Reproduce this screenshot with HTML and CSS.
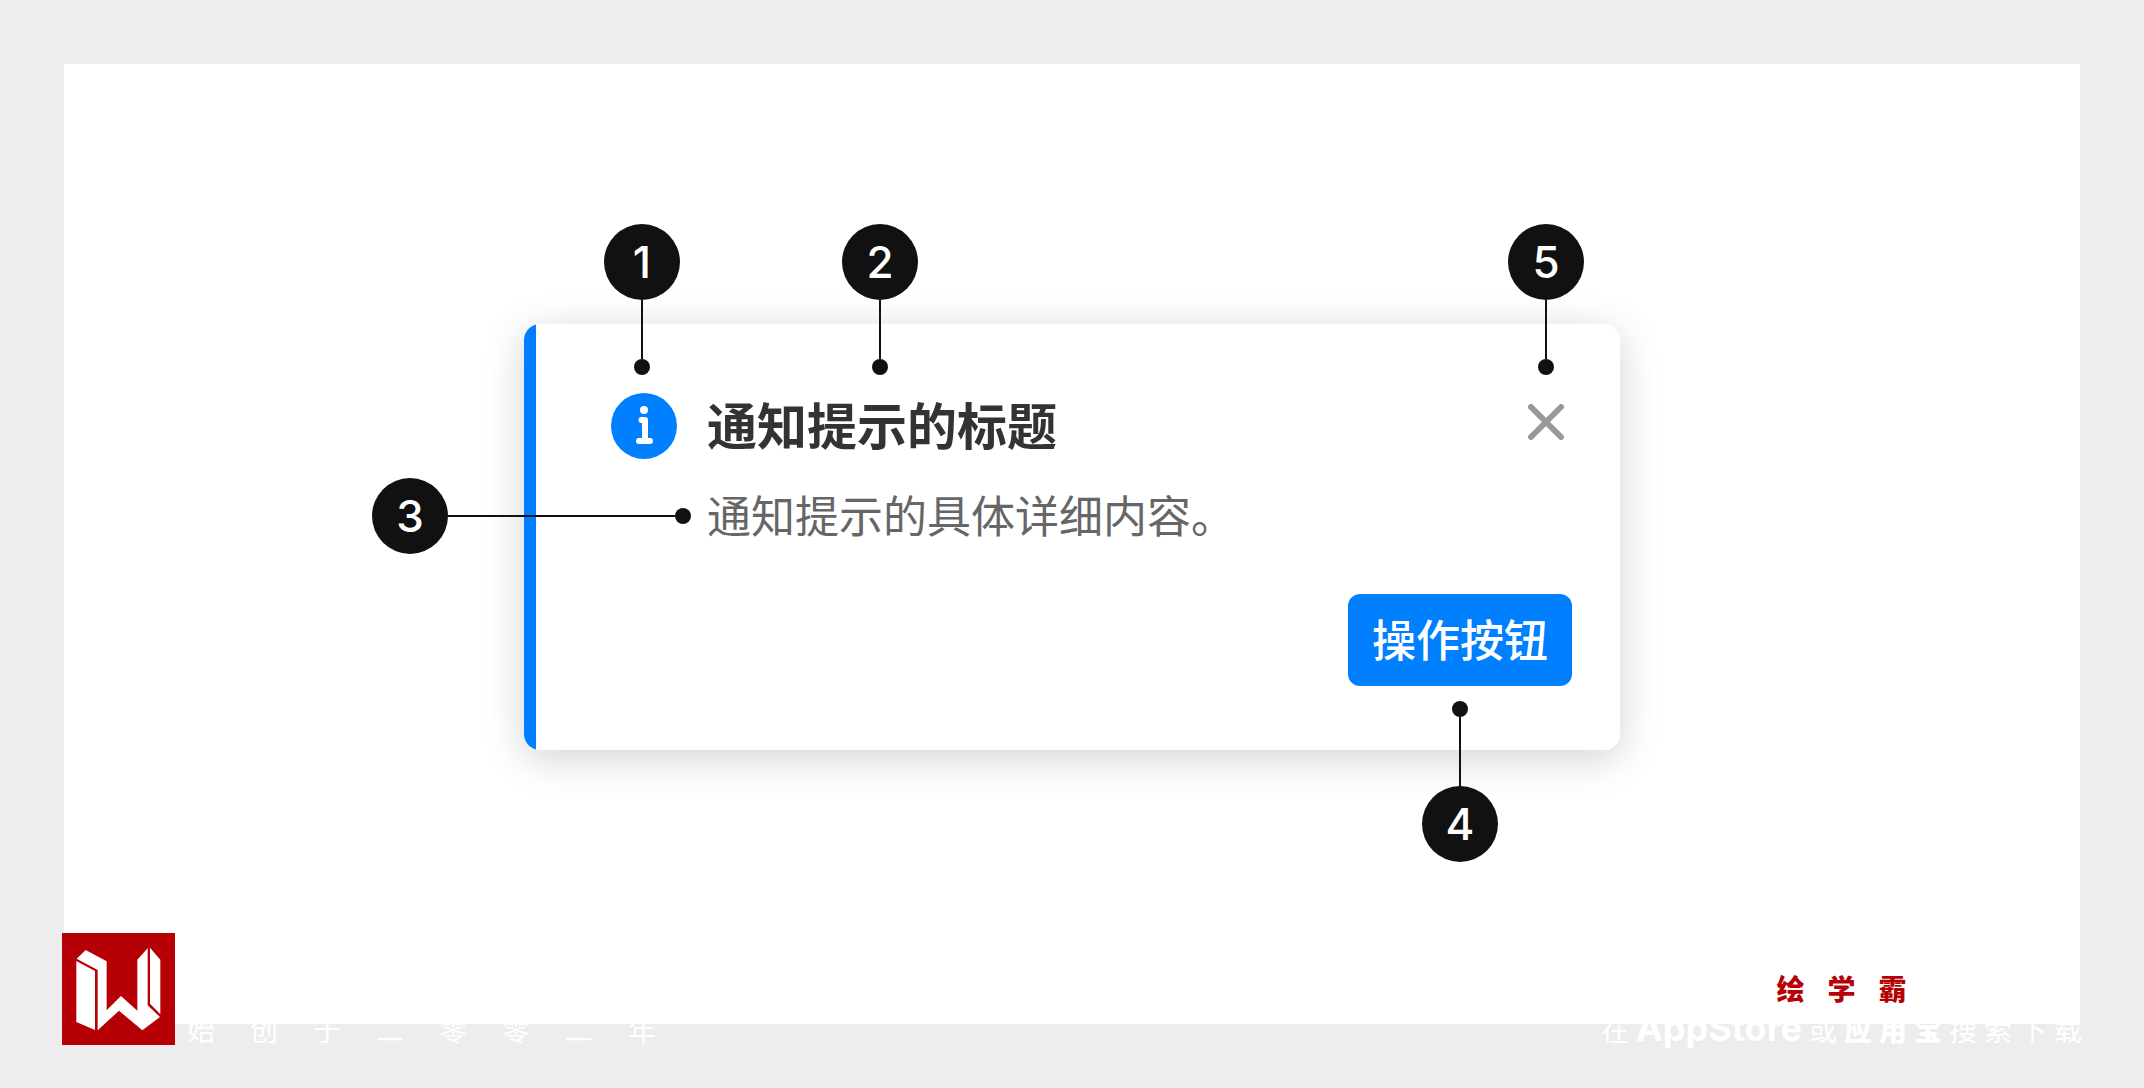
FILE: index.html
```html
<!DOCTYPE html>
<html lang="zh-CN">
<head>
    <meta charset="UTF-8">
    <meta name="viewport" content="width=device-width, initial-scale=1.0">
    <title>通知提示</title>
    <link rel="stylesheet" href="styles.css">
</head>
<body>
    <main class="board">
        <section class="notice">
            <svg class="notice-icon" viewBox="0 0 66 66" aria-hidden="true">
                <circle cx="33" cy="33" r="33" fill="#007fff"/>
                <circle cx="33" cy="17" r="4" fill="#fff"/>
                <path d="M30.500 27H34V47M28 48H39" fill="none" stroke="#fff" stroke-width="6" stroke-linecap="round" stroke-linejoin="round"/>
            </svg>
            <div class="notice-text">
                <h2>通知提示的标题</h2>
                <p>通知提示的具体详细内容。</p>
            </div>
            <button class="notice-close" type="button" aria-label="关闭">
                <svg viewBox="0 0 36 36" aria-hidden="true">
                    <path d="M3 3L33 33M33 3L3 33" stroke="#999" stroke-width="6" stroke-linecap="round"/>
                </svg>
            </button>
            <button class="notice-action" type="button">操作按钮</button>

            <!-- numbered pins over the card -->
            <div class="pin pin-icon"><b>1</b><i></i></div>
            <div class="pin pin-title"><b>2</b><i></i></div>
            <div class="pin pin-content"><b>3</b><i></i></div>
            <div class="pin pin-action"><b>4</b><i></i></div>
            <div class="pin pin-close"><b>5</b><i></i></div>
        </section>
    </main>

    <footer class="watermark">
        <svg class="logo" viewBox="0 0 339 336" aria-hidden="true">
            <path fill="#b60005" d="M0 0H339V336H0Z"/>
            <path fill="#fff" d="M71 51L134 85V232L177 189L226 233V80L257 46V217L294 252L241 292L171 233L107 292V111L44 77Z"/>
            <path fill="#fff" d="M43 84L99 114V291L43 267ZM264 44L295 80V244L264 212Z"/>
        </svg>
        <div class="since">
            <span>始</span><span>创</span><span>于</span><span>二</span><span>零</span><span>零</span><span>二</span><span>年</span>
        </div>
        <div class="download">
            <div class="brand"><span>绘</span><span>学</span><span>霸</span></div>
            <div class="stores">
                <span>在</span>
                <strong class="store-en">AppStore</strong>
                <span>或</span>
                <strong>应</strong><strong>用</strong><strong>宝</strong>
                <span>搜</span><span>索</span><span>下</span><span>载</span>
            </div>
        </div>
    </footer>
</body>
</html>
```
FILE: styles.css
```css
* {
    box-sizing: border-box;
}
body {
    margin: 0;
    padding: 64px;
    min-height: 100vh;
    display: flex;
    flex-direction: column;
    background: #ededed;
    font-family: "Noto Sans CJK SC", sans-serif;
}
.board {
    flex: 1;
    display: flex;
    justify-content: center;
    align-items: flex-start;
    padding: 260px 48px 0;
    background: #fff;
}
.notice {
    position: relative;
    display: grid;
    grid-template-columns: 66px 1fr auto;
    column-gap: 30px;
    width: 100%;
    max-width: 1096px;
    padding: 64px 48px 64px 87px;
    border-radius: 16px;
    background: linear-gradient(to right, #007fff 12px, #fff 12px);
    box-shadow: 0 8px 40px rgba(0, 0, 0, 0.18);
}
.notice-icon {
    width: 66px;
    height: 66px;
    margin-top: 5px;
}
.notice-text h2 {
    margin: 0 0 24px;
    font-size: 50px;
    font-weight: 700;
    line-height: 70px;
    color: #333;
}
.notice-text p {
    margin: 0;
    font-size: 44px;
    font-weight: 400;
    line-height: 64px;
    color: #666;
}
.notice-close {
    width: 36px;
    height: 36px;
    margin: 16px 8px 0;
    padding: 0;
    border: none;
    background: none;
    cursor: pointer;
}
.notice-close svg {
    display: block;
}
.notice-action {
    grid-column: 1 / -1;
    justify-self: end;
    height: 92px;
    margin-top: 48px;
    padding: 0 24px 4px;
    border: none;
    border-radius: 12px;
    background: #007fff;
    color: #fff;
    font-family: inherit;
    font-size: 44px;
    font-weight: 500;
    cursor: pointer;
}

/* pins */
.pin {
    position: absolute;
    display: flex;
    flex-direction: column;
    align-items: center;
}
.pin b {
    width: 76px;
    height: 76px;
    border-radius: 50%;
    background: #111;
    color: #fff;
    font-family: Inter, sans-serif;
    font-size: 44px;
    font-weight: 500;
    line-height: 76px;
    text-align: center;
}
.pin i {
    display: flex;
    flex-direction: column;
    align-items: center;
}
.pin i::before {
    content: "";
    width: 2px;
    height: 59px;
    background: #111;
}
.pin i::after {
    content: "";
    width: 16px;
    height: 16px;
    border-radius: 50%;
    background: #111;
}
.pin-icon {
    top: -100px;
    left: 80px;
}
.pin-title {
    top: -100px;
    left: 318px;
}
.pin-close {
    top: -100px;
    right: 36px;
}
.pin-action {
    top: 377px;
    right: 122px;
    flex-direction: column-reverse;
}
.pin-action i {
    flex-direction: column-reverse;
}
.pin-action i::before {
    height: 69px;
}
.pin-content {
    top: 154px;
    left: -152px;
    flex-direction: row;
}
.pin-content i {
    flex-direction: row;
}
.pin-content i::before {
    width: 227px;
    height: 2px;
}

/* watermark strip over the lower edge of the board */
.watermark {
    position: absolute;
    left: 62px;
    right: 62px;
    bottom: 43px;
    display: flex;
    align-items: flex-end;
    color: #fff;
    font-size: 28px;
    line-height: 32px;
}
.logo {
    width: 113px;
    height: 112px;
}
.since {
    display: flex;
    gap: 35px;
    margin-left: 12px;
}
.download {
    margin-left: auto;
}
.brand {
    display: flex;
    justify-content: center;
    gap: 23px;
    margin-bottom: 8px;
    color: #b60005;
    font-size: 28px;
    font-weight: 900;
}
.stores {
    display: flex;
    align-items: baseline;
    gap: 7px;
}
.stores strong {
    font-weight: 900;
}
.stores .store-en {
    font-family: Inter, sans-serif;
    font-size: 36px;
    font-weight: 700;
}
```
